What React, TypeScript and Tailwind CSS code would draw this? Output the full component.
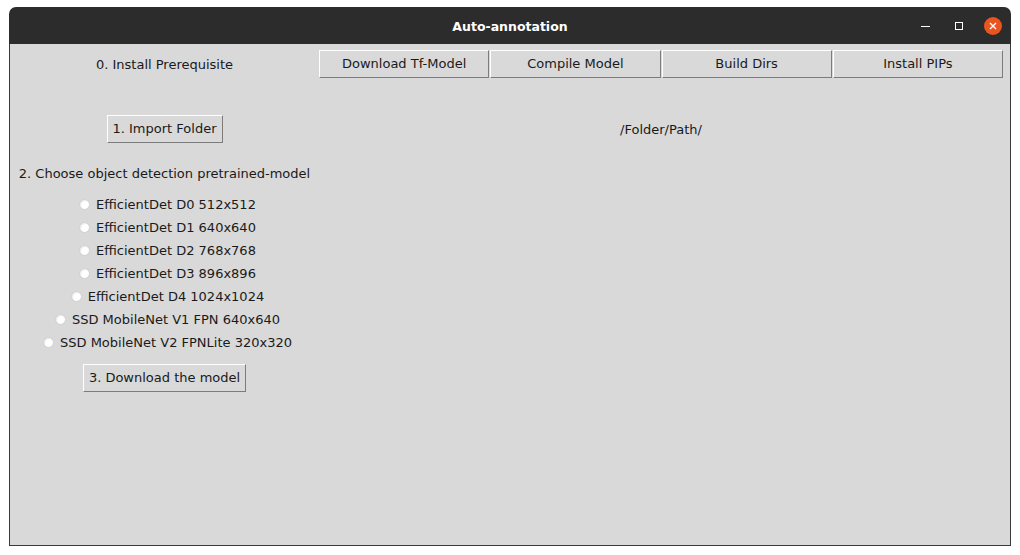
import React from 'react'

const models = [
  'EfficientDet D0 512x512',
  'EfficientDet D1 640x640',
  'EfficientDet D2 768x768',
  'EfficientDet D3 896x896',
  'EfficientDet D4 1024x1024',
  'SSD MobileNet V1 FPN 640x640',
  'SSD MobileNet V2 FPNLite 320x320',
]

const topButtons = ['Download Tf-Model', 'Compile Model', 'Build Dirs', 'Install PIPs']

function TkButton({ label, className = '' }: { label: string; className?: string }) {
  return (
    <button
      className={`h-[28px] px-[5px] bg-[#d9d9d9] text-[13px] text-[#1a1a1a] border border-t-white border-l-white border-b-[#7c7c7c] border-r-[#7c7c7c] ${className}`}
    >
      {label}
    </button>
  )
}

export default function App() {
  return (
    <div
      className="w-[1020px] h-[555px] bg-white pt-[7px] pl-[9px]"
      style={{ fontFamily: '"DejaVu Sans", sans-serif' }}
    >
      <div className="w-[1002px] flex flex-col">
        {/* title bar */}
        <div className="h-[37px] bg-[#2c2c2c] rounded-t-[7px] relative flex items-center justify-center">
          <span className="text-white font-bold text-[12.5px] mt-[4px]">Auto-annotation</span>
          <div className="absolute right-[9px] top-0 h-full flex items-center">
            <div className="w-[9px] h-[1px] bg-white mt-[1px]" />
            <div className="w-[8px] h-[8px] border border-white ml-[25px]" />
            <div className="w-[18px] h-[18px] rounded-full bg-[#e95420] flex items-center justify-center ml-[21px]">
              <svg width="8" height="8" viewBox="0 0 8 8">
                <path d="M1 1L7 7M7 1L1 7" stroke="white" strokeWidth="1.4" />
              </svg>
            </div>
          </div>
        </div>

        {/* body */}
        <div className="h-[502px] bg-[#d9d9d9] border-x border-b border-[#3a3a3a] text-[13px] text-[#1a1a1a]">
          <div className="flex pt-[6px]">
            <div className="w-[309px] h-[28px] flex items-center justify-center pt-[1px]">
              0. Install Prerequisite
            </div>
            <div className="flex-1 grid grid-cols-4 gap-[1px] mr-[7px]">
              {topButtons.map(b => (
                <TkButton key={b} label={b} />
              ))}
            </div>
          </div>

          <div className="flex mt-[37px] items-center">
            <div className="w-[309px] flex justify-center">
              <TkButton label="1. Import Folder" />
            </div>
            <div className="flex-1 mr-[7px] text-center pt-[2px]">/Folder/Path/</div>
          </div>

          <div className="w-[309px] flex flex-col items-center">
            <div className="mt-[21px] h-[20px] leading-[20px]">2. Choose object detection pretrained-model</div>
            <div className="mt-[9px] flex flex-col items-center pl-[6px]">
              {models.map(m => (
                <label key={m} className="h-[23px] flex items-center gap-[6px]">
                  <span className="w-[11px] h-[11px] rounded-full bg-white border border-[#cfcfcf] shadow-[inset_1px_1px_1px_rgba(0,0,0,0.08)]" />
                  <span>{m}</span>
                </label>
              ))}
            </div>
            <TkButton label="3. Download the model" className="mt-[10px]" />
          </div>
        </div>
      </div>
    </div>
  )
}
